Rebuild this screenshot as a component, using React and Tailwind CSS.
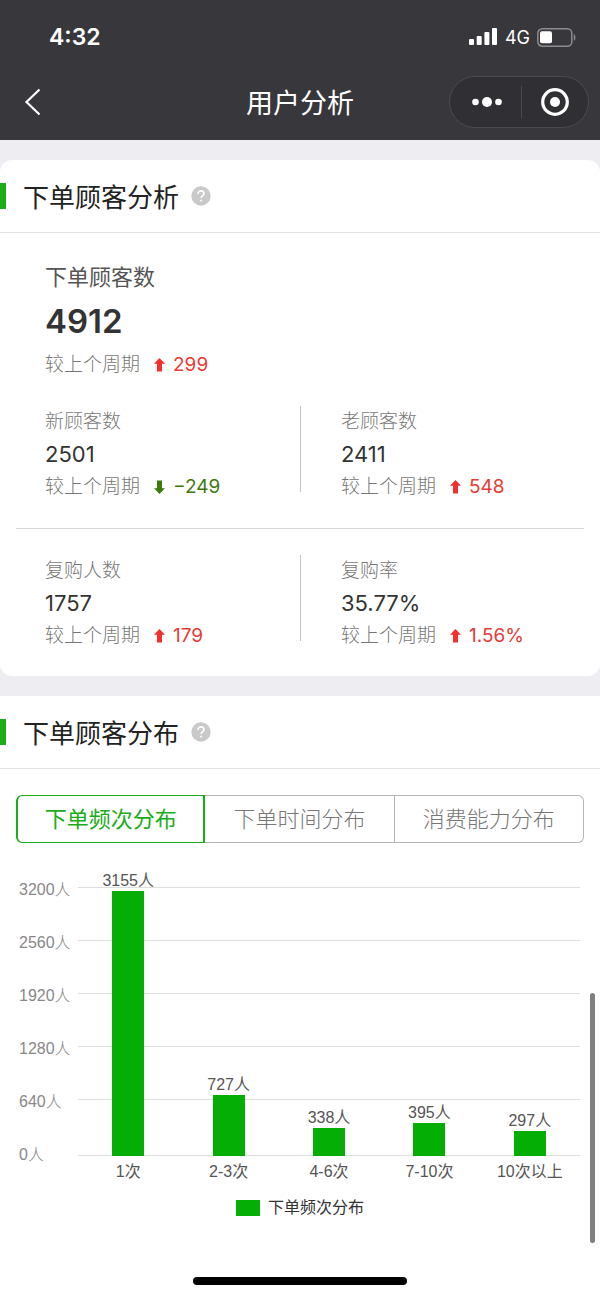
import React, { useState } from 'react';
import clsx from 'clsx';

const tabs = ['下单频次分布', '下单时间分布', '消费能力分布'];

const ticks = [3200, 2560, 1920, 1280, 640, 0];

const frequency = [
  { label: '1次', value: 3155 },
  { label: '2-3次', value: 727 },
  { label: '4-6次', value: 338 },
  { label: '7-10次', value: 395 },
  { label: '10次以上', value: 297 }
];

const statRows = [
  [
    { title: '新顾客数', value: '2501', change: '−249', down: true },
    { title: '老顾客数', value: '2411', change: '548' }
  ],
  [
    { title: '复购人数', value: '1757', change: '179' },
    { title: '复购率', value: '35.77%', change: '1.56%' }
  ]
];

function StatusBar() {
  return (
    <div className="flex h-[74px] items-center justify-between pr-6 pl-[49px]">
      <span className="text-[23px] font-semibold">4:32</span>
      <div className="flex items-center gap-[7px]">
        <svg width="29" height="18" viewBox="0 0 29 18" fill="currentColor">
          <rect x="0" y="11" width="5" height="6" rx="1" />
          <rect x="7.7" y="8" width="5" height="9" rx="1" />
          <rect x="15.4" y="4" width="5" height="13" rx="1" />
          <rect x="23" y="0" width="5" height="17" rx="1" />
        </svg>
        <span className="text-[18px]">4G</span>
        <svg width="39" height="19" viewBox="0 0 39 19" fill="none">
          <rect x="0.8" y="0.8" width="34" height="17.4" rx="4.5" stroke="#8d8c90" strokeWidth="1.5" />
          <rect x="3" y="3.2" width="12" height="12" rx="2" fill="#fff" />
          <path d="M36.8 6.2c1.3.7 1.6 1.8 1.6 3.3s-.3 2.6-1.6 3.3z" fill="#8d8c90" />
        </svg>
      </div>
    </div>
  );
}

function NavBar() {
  return (
    <div className="grid h-14 grid-cols-[1fr_auto_1fr] items-center">
      <button type="button" aria-label="返回" className="justify-self-start pl-6">
        <svg width="17" height="28" viewBox="0 0 17 28" fill="none" stroke="currentColor" strokeWidth="2.2">
          <path d="M15.5 1.5 2.5 14l13 12.5" />
        </svg>
      </button>
      <h1 className="pt-1 text-[27px] leading-10">用户分析</h1>
      <div className="mr-[11px] flex h-[52px] w-[140px] items-center justify-self-end rounded-full border border-[#4b4a4f] bg-[#303034]">
        <button type="button" aria-label="更多" className="flex flex-1 justify-center pl-1">
          <svg width="32" height="12" viewBox="0 0 32 12" fill="currentColor">
            <circle cx="4.5" cy="6" r="3.3" />
            <circle cx="16" cy="6" r="5" />
            <circle cx="27.5" cy="6" r="3.3" />
          </svg>
        </button>
        <span className="h-8 w-px bg-[#4b4a4f]" />
        <button type="button" aria-label="关闭" className="flex flex-1 justify-center">
          <svg width="30" height="30" viewBox="0 0 30 30">
            <circle cx="15" cy="15" r="12.3" fill="none" stroke="currentColor" strokeWidth="3.2" />
            <circle cx="15" cy="15" r="5" fill="currentColor" />
          </svg>
        </button>
      </div>
    </div>
  );
}

function SectionHeader({ title }) {
  return (
    <div className="flex h-[73px] items-center border-b border-[#e2e2e4]">
      <span className="h-[26px] w-[6px] bg-[#1aad19]" />
      <h2 className="ml-[17px] pt-1 text-[26px] leading-9 text-[#222]">{title}</h2>
      <button type="button" aria-label="说明" className="ml-3">
        <svg width="20" height="20" viewBox="0 0 20 20" fill="none">
          <circle cx="10" cy="10" r="9.7" fill="#c9c9c9" />
          <path
            d="M7 8c0-1.9 1.3-3.1 3-3.1s3 1.1 3 2.7c0 2.2-2.9 2.2-2.9 4.3"
            stroke="#fff"
            strokeWidth="1.6"
          />
          <circle cx="10.1" cy="14.5" r="1" fill="#fff" />
        </svg>
      </button>
    </div>
  );
}

function Change({ value, down }) {
  return (
    <div className="flex items-center text-[19px] leading-[34px]">
      <span className="font-light text-[#777]">较上个周期</span>
      <span className={clsx('ml-[14px] flex items-center gap-2', down ? 'text-[#3d7a0e]' : 'text-[#e83a36]')}>
        <svg
          width="11"
          height="14"
          viewBox="0 0 11 14"
          className={down ? 'rotate-180 text-[#3d7a0e]' : 'text-[#f52f2b]'}
          fill="currentColor"
        >
          <path d="M5.5 0 11 5.8H8V13.5H3V5.8H0z" />
        </svg>
        {value}
      </span>
    </div>
  );
}

function Stat({ title, value, change, down }) {
  return (
    <div>
      <div className="text-[19px] leading-8 font-light text-[#777]">{title}</div>
      <div className="text-[22px] leading-8 text-[#333]">{value}</div>
      <Change value={change} down={down} />
    </div>
  );
}

function BarChart({ data, name }) {
  const max = ticks[0];

  return (
    <div className="mt-5 font-['Liberation_Sans','Noto_Sans_CJK_SC',sans-serif] text-[16px]">
      <div className="grid grid-cols-[59px_1fr] pr-5 pl-[19px]">
        {/* Y axis */}
        <div className="font-light text-[#888]">
          {ticks.map((tick) => (
            <div key={tick} className="flex h-[53px] items-center">
              {tick}人
            </div>
          ))}
        </div>

        <div className="pt-6">
          {/* Plot */}
          <div className="relative h-[269px]">
            <div className="flex h-full flex-col">
              {ticks.slice(0, 5).map((tick) => (
                <div key={tick} className="h-[53px] border-t border-[#dedede] last:flex-1 last:border-b" />
              ))}
            </div>
            <div className="absolute inset-0 flex">
              {data.map((item) => (
                <div key={item.label} className="flex h-full flex-1 flex-col items-center justify-end">
                  <span className="leading-5 whitespace-nowrap text-[#555]">{item.value}人</span>
                  <div
                    className="w-8 shrink-0 bg-[#04ae04]"
                    style={{ height: `${(item.value / max) * 100}%` }}
                  />
                </div>
              ))}
            </div>
          </div>

          {/* X axis */}
          <div className="flex text-[#555]">
            {data.map((item) => (
              <span key={item.label} className="flex-1 text-center leading-8 whitespace-nowrap">
                {item.label}
              </span>
            ))}
          </div>
        </div>
      </div>

      {/* Legend */}
      <div className="mt-2 flex items-center justify-center gap-2 leading-6 text-[#333]">
        <span className="h-4 w-6 bg-[#04ae04]" />
        {name}
      </div>
    </div>
  );
}

export default function App() {
  const [activeTab, setActiveTab] = useState(0);

  return (
    <div className="relative flex min-h-screen flex-col bg-[#eeedf2] font-['Inter','Noto_Sans_CJK_SC',sans-serif]">
      <header className="bg-[#38373b] pb-[10px] text-white">
        <StatusBar />
        <NavBar />
      </header>

      <section className="mt-5 rounded-xl bg-white pb-[23px]">
        <SectionHeader title="下单顾客分析" />
        <div className="px-[45px] pt-[27px] pb-6">
          <div className="text-[22px] leading-[34px] text-[#555]">下单顾客数</div>
          <div className="text-[33px] leading-[54px] font-semibold text-[#333]">4912</div>
          <Change value="299" />
        </div>

        {statRows.map((row, index) => (
          <div key={index}>
            {index > 0 && <hr className="mx-4 mt-6 mb-[26px] border-[#d9d9d9]" />}
            <div className="grid grid-cols-2">
              <div className="pl-[45px]">
                <Stat {...row[0]} />
              </div>
              <div className="flex items-start">
                <span className="h-[86px] w-px bg-[#c4c4c4]" />
                <div className="pl-10">
                  <Stat {...row[1]} />
                </div>
              </div>
            </div>
          </div>
        ))}
      </section>

      <section className="mt-5 flex flex-1 flex-col bg-white">
        <SectionHeader title="下单顾客分布" />
        <div className="mx-4 mt-[26px] grid h-12 grid-cols-3">
          {tabs.map((tab, index) => (
            <button
              key={tab}
              type="button"
              onClick={() => setActiveTab(index)}
              className={clsx(
                'border text-[22px] first:rounded-l-md last:rounded-r-md',
                index > 0 && 'border-l-0',
                index === activeTab
                  ? 'border-r-2 border-[#1aad19] text-[#1aad19] first:border-l-2'
                  : 'border-[#b5b5b5] font-light text-[#777]'
              )}
            >
              {tab}
            </button>
          ))}
        </div>
        <BarChart data={frequency} name={tabs[activeTab]} />
        <div className="mt-auto flex justify-center pt-10 pb-[13px]">
          <span className="h-2 w-[214px] rounded-full bg-black" />
        </div>
      </section>

      {/* Scroll thumb */}
      <span className="absolute right-[5px] bottom-[55px] h-[250px] w-[5px] rounded-full bg-[#808080]" />
    </div>
  );
}
